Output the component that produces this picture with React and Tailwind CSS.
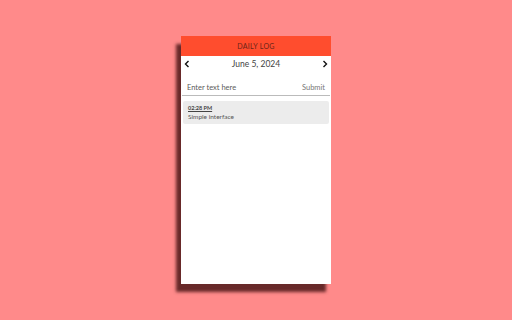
export default function App() {
  return (
    <div className="w-[512px] h-[320px] bg-[#ff8a8a] flex items-center justify-center" style={{ fontFamily: "Lato, 'Open Sans', sans-serif" }}>
      <div className="w-[150px] h-[248px] bg-white flex flex-col shadow-[-5px_8px_3px_rgba(40,0,0,0.7)]">
        <div className="h-[20px] bg-[#ff4d2e] flex items-center justify-center text-[7px] tracking-[0.3px] text-[#6a2418]">DAILY LOG</div>
        <div className="h-[16px] flex items-center justify-between px-[3px] text-[#222]">
          <svg width="6" height="8" viewBox="0 0 6 8"><path d="M4.5 1 L1.5 4 L4.5 7" fill="none" stroke="#111" strokeWidth="1.4" /></svg>
          <span className="text-[8.5px] text-[#444]">June 5, 2024</span>
          <svg width="6" height="8" viewBox="0 0 6 8"><path d="M1.5 1 L4.5 4 L1.5 7" fill="none" stroke="#111" strokeWidth="1.4" /></svg>
        </div>
        <div className="mt-[8px] h-[16px] mx-[1px] border-b border-[#bbb] flex items-center justify-between px-[5px] text-[7.5px] text-[#5a5a5a]">
          <span>Enter text here</span>
          <span className="text-[#777]">Submit</span>
        </div>
        <div className="mt-[5px] mx-[2px] h-[23px] bg-[#ececec] rounded-[2px] flex flex-col justify-center px-[5px]">
          <span className="text-[5.5px] font-bold text-[#444] leading-[8px] underline">02:28 PM</span>
          <span className="text-[6.5px] text-[#555] leading-[9px]">Simple interface</span>
        </div>
      </div>
    </div>
  );
}
